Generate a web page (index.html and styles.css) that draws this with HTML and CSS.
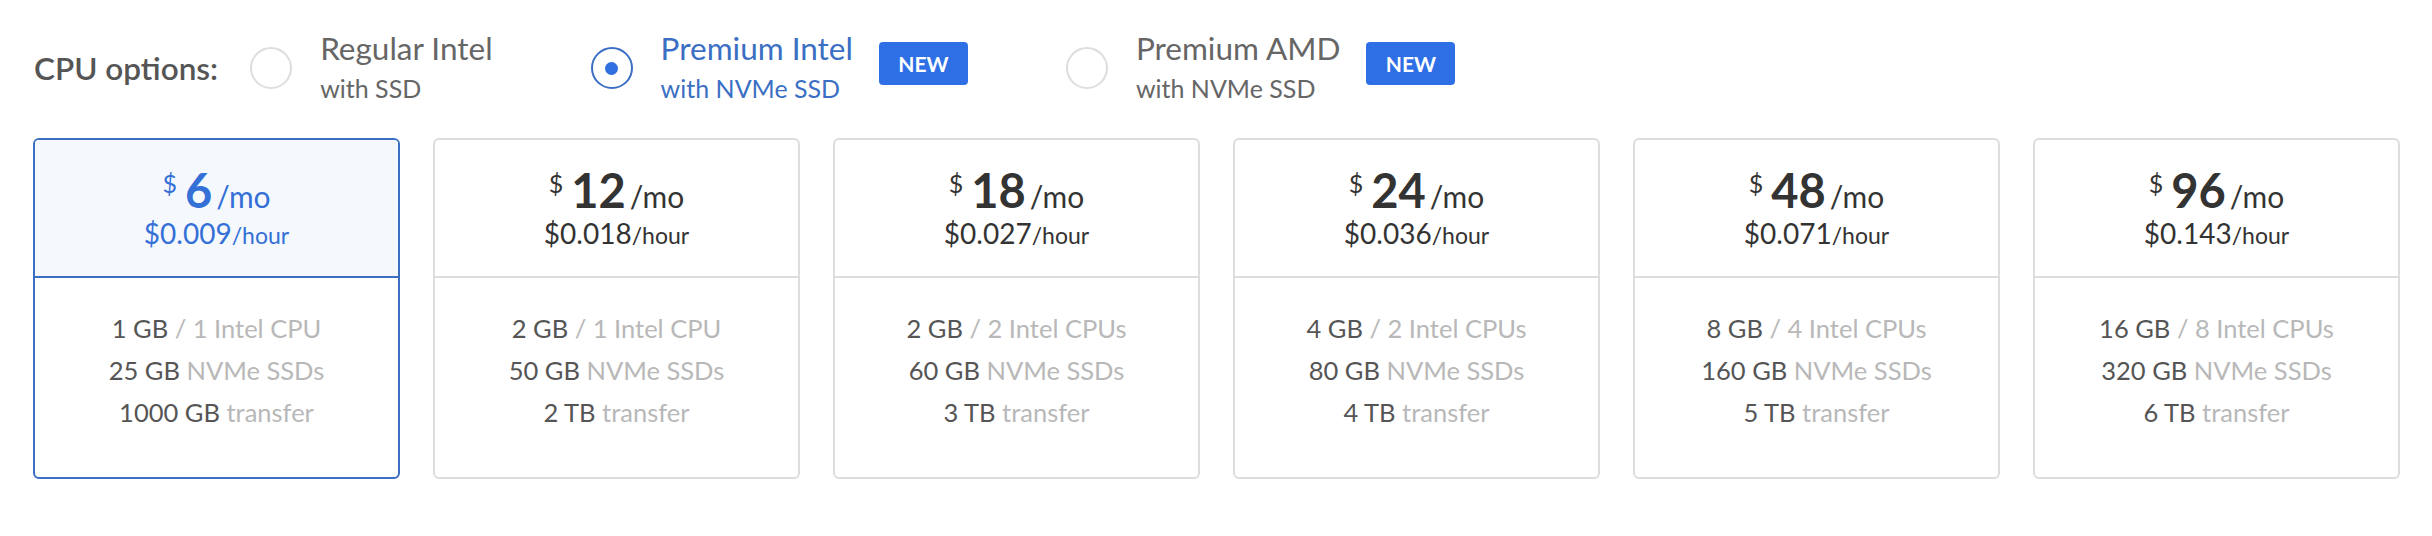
FILE: index.html
```html
<!DOCTYPE html>
<html lang="en">
<head>
<meta charset="utf-8">
<title>CPU options</title>
<link rel="stylesheet" href="styles.css">
</head>
<body>
<div class="page">
  <div class="options">
    <div class="label">CPU options:</div>
    <div class="option">
      <span class="radio"></span>
      <div class="opt-text">
        <div class="opt-title">Regular Intel</div>
        <div class="opt-sub">with SSD</div>
      </div>
    </div>
    <div class="option selected">
      <span class="radio"><span class="dot"></span></span>
      <div class="opt-text">
        <div class="opt-title">Premium Intel</div>
        <div class="opt-sub">with NVMe SSD</div>
      </div>
      <span class="badge">NEW</span>
    </div>
    <div class="option">
      <span class="radio"></span>
      <div class="opt-text">
        <div class="opt-title">Premium AMD</div>
        <div class="opt-sub">with NVMe SSD</div>
      </div>
      <span class="badge">NEW</span>
    </div>
  </div>

  <div class="plans">
    <div class="plan active">
      <div class="plan-head">
        <div class="price"><span class="cur">$</span><span class="amt">6</span><span class="per">/mo</span></div>
        <div class="hourly"><span class="hval">$0.009</span><span class="hper">/hour</span></div>
      </div>
      <div class="plan-body">
        <div class="spec"><b>1 GB</b> <span>/ 1 Intel CPU</span></div>
        <div class="spec"><b>25 GB</b> <span>NVMe SSDs</span></div>
        <div class="spec"><b>1000 GB</b> <span>transfer</span></div>
      </div>
    </div>
    <div class="plan">
      <div class="plan-head">
        <div class="price"><span class="cur">$</span><span class="amt">12</span><span class="per">/mo</span></div>
        <div class="hourly"><span class="hval">$0.018</span><span class="hper">/hour</span></div>
      </div>
      <div class="plan-body">
        <div class="spec"><b>2 GB</b> <span>/ 1 Intel CPU</span></div>
        <div class="spec"><b>50 GB</b> <span>NVMe SSDs</span></div>
        <div class="spec"><b>2 TB</b> <span>transfer</span></div>
      </div>
    </div>
    <div class="plan">
      <div class="plan-head">
        <div class="price"><span class="cur">$</span><span class="amt">18</span><span class="per">/mo</span></div>
        <div class="hourly"><span class="hval">$0.027</span><span class="hper">/hour</span></div>
      </div>
      <div class="plan-body">
        <div class="spec"><b>2 GB</b> <span>/ 2 Intel CPUs</span></div>
        <div class="spec"><b>60 GB</b> <span>NVMe SSDs</span></div>
        <div class="spec"><b>3 TB</b> <span>transfer</span></div>
      </div>
    </div>
    <div class="plan">
      <div class="plan-head">
        <div class="price"><span class="cur">$</span><span class="amt">24</span><span class="per">/mo</span></div>
        <div class="hourly"><span class="hval">$0.036</span><span class="hper">/hour</span></div>
      </div>
      <div class="plan-body">
        <div class="spec"><b>4 GB</b> <span>/ 2 Intel CPUs</span></div>
        <div class="spec"><b>80 GB</b> <span>NVMe SSDs</span></div>
        <div class="spec"><b>4 TB</b> <span>transfer</span></div>
      </div>
    </div>
    <div class="plan">
      <div class="plan-head">
        <div class="price"><span class="cur">$</span><span class="amt">48</span><span class="per">/mo</span></div>
        <div class="hourly"><span class="hval">$0.071</span><span class="hper">/hour</span></div>
      </div>
      <div class="plan-body">
        <div class="spec"><b>8 GB</b> <span>/ 4 Intel CPUs</span></div>
        <div class="spec"><b>160 GB</b> <span>NVMe SSDs</span></div>
        <div class="spec"><b>5 TB</b> <span>transfer</span></div>
      </div>
    </div>
    <div class="plan">
      <div class="plan-head">
        <div class="price"><span class="cur">$</span><span class="amt">96</span><span class="per">/mo</span></div>
        <div class="hourly"><span class="hval">$0.143</span><span class="hper">/hour</span></div>
      </div>
      <div class="plan-body">
        <div class="spec"><b>16 GB</b> <span>/ 8 Intel CPUs</span></div>
        <div class="spec"><b>320 GB</b> <span>NVMe SSDs</span></div>
        <div class="spec"><b>6 TB</b> <span>transfer</span></div>
      </div>
    </div>
  </div>
</div>
</body>
</html>
```

FILE: styles.css
```css
* { box-sizing: border-box; }

html, body {
  margin: 0;
  padding: 0;
  background: #ffffff;
}

body {
  font-family: Lato, "Open Sans", "Liberation Sans", sans-serif;
  color: #555555;
}

.page {
  width: 2432px;
  height: 536px;
}

.options {
  height: 136px;
  display: flex;
  align-items: center;
  padding-left: 34px;
}

.label {
  font-size: 31.5px;
  font-weight: 600;
  color: #555555;
  margin-right: 32px;
}

.option {
  display: flex;
  align-items: center;
  margin-right: 98px;
  color: #666666;
}

.radio {
  width: 42px;
  height: 42px;
  border-radius: 50%;
  border: 2px solid #dddddd;
  display: flex;
  align-items: center;
  justify-content: center;
  flex: none;
}

.selected .radio {
  border-color: #3b6fc4;
}

.dot {
  width: 13px;
  height: 13px;
  border-radius: 50%;
  background: #2f6fe0;
}

.opt-text {
  margin-left: 28px;
  padding-top: 2px;
}

.opt-title {
  font-size: 31.5px;
  line-height: 38px;
}

.opt-sub {
  font-size: 25px;
  line-height: 42px;
}

.selected .opt-text {
  color: #3b6fc4;
}

.badge {
  margin-left: 26px;
  margin-bottom: 9px;
  width: 89px;
  height: 43px;
  border-radius: 4px;
  background: #2f6fe6;
  color: #ffffff;
  font-weight: 700;
  font-size: 21px;
  display: flex;
  align-items: center;
  justify-content: center;
}

.plans {
  margin-top: 2px;
  padding: 0 32px 0 33px;
  display: grid;
  grid-template-columns: repeat(6, 1fr);
  column-gap: 33px;
}

.plan {
  height: 341px;
  border: 2px solid #dddddd;
  border-radius: 6px;
  display: flex;
  flex-direction: column;
  overflow: hidden;
}

.plan.active {
  border-color: #3b6fc2;
}

.plan-head {
  height: 138px;
  border-bottom: 2px solid #dddddd;
  padding-top: 27px;
  text-align: center;
  color: #333333;
}

.active .plan-head {
  background: #f5f9fe;
  border-bottom-color: #3b6fc2;
  color: #3470d6;
}

.price {
  display: flex;
  justify-content: center;
  align-items: baseline;
  line-height: 1;
}

.cur {
  align-self: flex-start;
  font-size: 25px;
  margin-top: 4px;
  margin-right: 8px;
}

.amt {
  font-size: 47px;
  font-weight: 700;
}

.per {
  font-size: 30px;
  margin-left: 4px;
}

.hourly {
  margin-top: 5px;
  line-height: 1;
}

.hval {
  font-size: 28px;
}

.hper {
  font-size: 23px;
}

.plan-body {
  flex: 1;
  padding-top: 29px;
  text-align: center;
}

.spec {
  font-size: 25.5px;
  line-height: 42px;
  color: #b8b8b8;
}

.spec b {
  font-weight: 400;
  color: #555555;
}
```
